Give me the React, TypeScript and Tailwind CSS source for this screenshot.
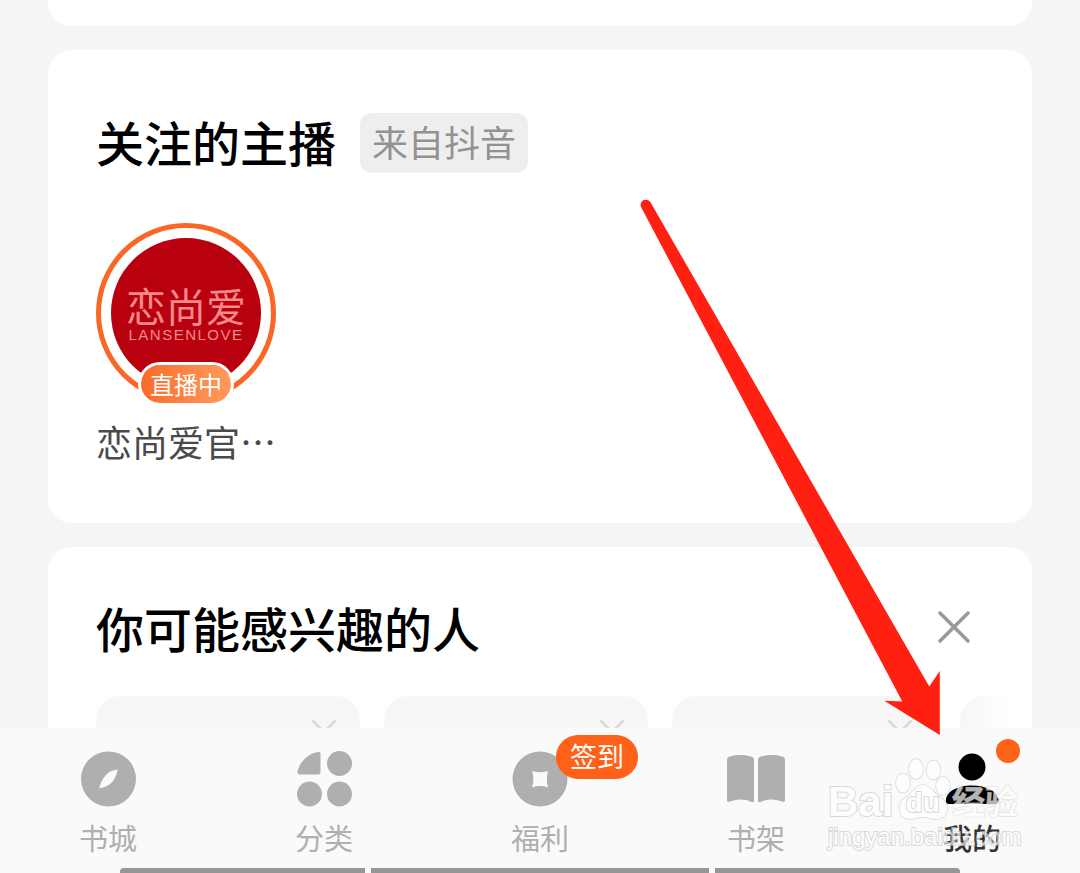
import { ReactNode } from "react";

interface Tab {
  label: string;
  icon: ReactNode;
  badge?: string;
  dot?: boolean;
  active?: boolean;
}

const CompassIcon = () => (
  <svg viewBox="0 0 56 56" className="size-14" fill="currentColor" aria-hidden>
    <path
      fillRule="evenodd"
      d="M28.5 0.5a27.5 27.5 0 1 1 0 55a27.5 27.5 0 0 1 0-55ZM37.6 18.4C32.5 19 28.500 20.8 25.6 24.2C22.4 28 20.6 32 19.2 37.2C25 36.6 28.8 34.6 32 31.200C35.2 27.600 36.8 23.6 37.6 18.4Z"
    />
  </svg>
);

const CategoryIcon = () => (
  <svg viewBox="0 0 56 56" className="size-14" fill="currentColor" aria-hidden>
    <path d="M24.5 3v18a2.5 2.5 0 0 1-2.5 2.5H4c-2 0-3-1.5-2.5-3.3C4.3 10 12 2.8 21.6 0.9c1.7-.3 2.9.6 2.9 2.1Z" />
    <circle cx="43.5" cy="12.5" r="12.5" />
    <circle cx="13.5" cy="43" r="12.5" />
    <circle cx="43.5" cy="43" r="12.5" />
  </svg>
);

const CoinIcon = () => (
  <svg viewBox="0 0 56 56" className="size-14" fill="currentColor" aria-hidden>
    <path
      fillRule="evenodd"
      d="M28 0.5a27.5 27.5 0 1 1 0 55a27.5 27.5 0 0 1 0-55ZM20 20C21.9 25.5 21.9 30.5 20 36.2C25.5 34.6 30.5 34.6 36 36.2C34.4 30.5 34.4 25.5 36 20C30.5 21.7 25.5 21.7 20 20Z"
    />
  </svg>
);

const BookIcon = () => (
  <svg viewBox="0 0 60 56" className="h-14 w-15" fill="currentColor" aria-hidden>
    <path d="M1 9C1 7 2 6 4 5.500C11 3.5 18 3.6 25 5.5C27 6 28 7 28 9V49.5C28 51 27 51.5 25.5 51C18 47.8 11 47.8 4 50.6C2.2 51.3 1 50.7 1 49Z" />
    <path d="M32 9C32 7 33 6 35 5.5C42 3.6 49 3.5 56 5.5C58 6 59 7 59 9V49C59 50.7 57.8 51.3 56 50.6C49 47.8 42 47.8 34.5 51C33 51.5 32 51 32 49.5Z" />
  </svg>
);

const UserIcon = () => (
  <svg viewBox="0 0 56 56" className="size-14" fill="currentColor" aria-hidden>
    <circle cx="28" cy="16" r="13.5" />
    <path d="M2 48.5C3 40 14 34.5 28 34.5S53 40 54.5 48.5C54.9 51.5 54 53 51.5 53H5C2.5 53 1.6 51.5 2 48.5Z" />
  </svg>
);

const TABS: Tab[] = [
  { label: "书城", icon: <CompassIcon /> },
  { label: "分类", icon: <CategoryIcon /> },
  { label: "福利", icon: <CoinIcon />, badge: "签到" },
  { label: "书架", icon: <BookIcon /> },
  { label: "我的", icon: <UserIcon />, dot: true, active: true },
];

const PEOPLE = [1, 2, 3, 4];

const Cross = ({ className }: { className: string }) => (
  <svg
    viewBox="0 0 32 32"
    className={className}
    fill="none"
    stroke="currentColor"
    strokeWidth="3.5"
    strokeLinecap="round"
    aria-hidden
  >
    <path d="M2 2L30 30M30 2L2 30" />
  </svg>
);

const Anchors = () => (
  <section className="rounded-3xl bg-white px-12 pt-[63px] pb-[58px]">
    <div className="flex items-start gap-6">
      <h2 className="text-5xl leading-[56px] font-medium text-black">
        关注的主播
      </h2>
      <span className="rounded-xl bg-[#eeeeee] px-3 pb-1 text-4xl leading-[56px] text-[#929292]">
        来自抖音
      </span>
    </div>
    <a href="#live" className="mt-[50px] flex w-[180px] flex-col items-center">
      <div className="relative flex size-[180px] items-center justify-center rounded-full border-5 border-[#fa6725]">
        <div className="flex size-[150px] flex-col items-center justify-center rounded-full bg-[#b9000f] text-[#f58a8a]">
          <span className="text-[40px] leading-[44px]">恋尚爱</span>
          <span className="font-['Liberation_Sans'] text-[15px] leading-4 tracking-widest">
            LANSENLOVE
          </span>
        </div>
        <span className="absolute -bottom-2 rounded-full border-3 border-white bg-linear-to-r from-[#fb6a26] to-[#ff9a5c] bg-clip-padding px-[9px] text-2xl leading-[38px] whitespace-nowrap text-white">
          直播中
        </span>
      </div>
      <span className="mt-3.5 text-4xl leading-[48px] whitespace-nowrap text-[#4a4a4a]">
        恋尚爱官…
      </span>
    </a>
  </section>
);

const People = () => (
  <section className="rounded-t-3xl bg-white pt-12 pl-12">
    <div className="flex items-center justify-between pr-[62px]">
      <h2 className="text-5xl leading-[64px] font-medium text-black">
        你可能感兴趣的人
      </h2>
      <button aria-label="关闭" className="text-[#999999]">
        <Cross className="size-8" />
      </button>
    </div>
    <div className="relative mt-[37px] mr-6 flex gap-6 overflow-hidden">
      {PEOPLE.map((id) => (
        <div
          key={id}
          className="flex h-80 w-[264px] shrink-0 items-start justify-end rounded-3xl bg-[#f6f6f6] p-6"
        >
          <button aria-label="不感兴趣" className="text-[#d8d8d8]">
            <Cross className="size-6" />
          </button>
        </div>
      ))}
      <div className="absolute inset-y-0 right-0 w-12 bg-linear-to-r from-white/0 to-white" />
    </div>
  </section>
);

const TabBar = () => (
  <nav className="shrink-0 bg-[#fafafa]">
    <div className="grid h-[140px] grid-cols-5">
      {TABS.map((tab) => (
        <a
          key={tab.label}
          href={`#${tab.label}`}
          className={`flex flex-col items-center pt-[23px] ${
            tab.active ? "text-black" : "text-[#afafaf]"
          }`}
        >
          <div className="relative">
            {tab.icon}
            {tab.badge && (
              <span className="absolute -top-4 left-11 rounded-full bg-[#ff6119] px-3.5 pb-0.5 text-[27px] leading-[42px] whitespace-nowrap text-white">
                {tab.badge}
              </span>
            )}
            {tab.dot && (
              <span className="absolute -top-3 -right-5 size-6 rounded-full bg-[#ff6119]" />
            )}
          </div>
          <span
            className={`mt-2.5 text-[29px] leading-10 ${
              tab.active ? "font-medium text-[#333333]" : ""
            }`}
          >
            {tab.label}
          </span>
        </a>
      ))}
    </div>
    <div className="mx-[120px] flex h-[5px] gap-1.5 overflow-hidden rounded-t">
      <span className="flex-[245] bg-[#969696]" />
      <span className="flex-[338] bg-[#969696]" />
      <span className="flex-[245] bg-[#969696]" />
    </div>
  </nav>
);

const Watermark = () => (
  <div className="pointer-events-none absolute right-[58px] bottom-5 w-[194px] font-['Liberation_Sans',_'Noto_Sans_CJK_SC',_sans-serif] text-white opacity-70 [-webkit-text-stroke:2px_#cccccc] [paint-order:stroke]">
    <div className="flex items-end justify-between pr-1">
      <span className="text-[42px] leading-[38px] font-bold">Bai</span>
      <div className="relative flex h-16 w-14 items-end justify-center">
        <svg
          viewBox="0 0 56 64"
          className="absolute inset-0"
          fill="white"
          stroke="#cccccc"
          strokeWidth="1.5"
          aria-hidden
        >
          <ellipse cx="8" cy="26" rx="7" ry="9.5" />
          <ellipse cx="21" cy="12" rx="7" ry="10" />
          <ellipse cx="38.5" cy="13" rx="7" ry="9.5" />
          <ellipse cx="48" cy="29" rx="7" ry="9" />
          <path d="M28 28C20 28 17 37 10 41C2 46 2 62 15 62C21 62 24 60 28 60S36 62 42 62C55 61 54 46 46 41C39 37 36 28 28 28Z" />
        </svg>
        <span className="relative text-[28px] leading-9 font-bold">du</span>
      </div>
      <span className="text-[33px] leading-9 font-bold [-webkit-text-stroke:1px_#cccccc]">
        经验
      </span>
    </div>
    <p className="text-2xl leading-8 whitespace-nowrap">jingyan.baidu.com</p>
  </div>
);

export default function App() {
  return (
    <div
      lang="zh-CN"
      className="relative flex h-screen flex-col overflow-hidden bg-[#f5f5f5] font-['Noto_Sans_CJK_SC',_sans-serif]"
    >
      <main className="flex min-h-0 flex-1 flex-col gap-6 overflow-hidden px-12">
        <section className="h-[26px] shrink-0 rounded-b-3xl bg-white" />
        <Anchors />
        <People />
      </main>
      <TabBar />
      <Watermark />
      <svg
        viewBox="0 0 300 536"
        className="pointer-events-none absolute right-[140px] bottom-[138px] h-[536px] w-[300px]"
        fill="#ff2012"
        aria-hidden
      >
        <path d="M1.3 8.5A5 5 0 0 1 10.6 3.5L289.3 487.5L299.8 472V536L244.3 501.8L262.3 502.5Z" />
      </svg>
    </div>
  );
}
